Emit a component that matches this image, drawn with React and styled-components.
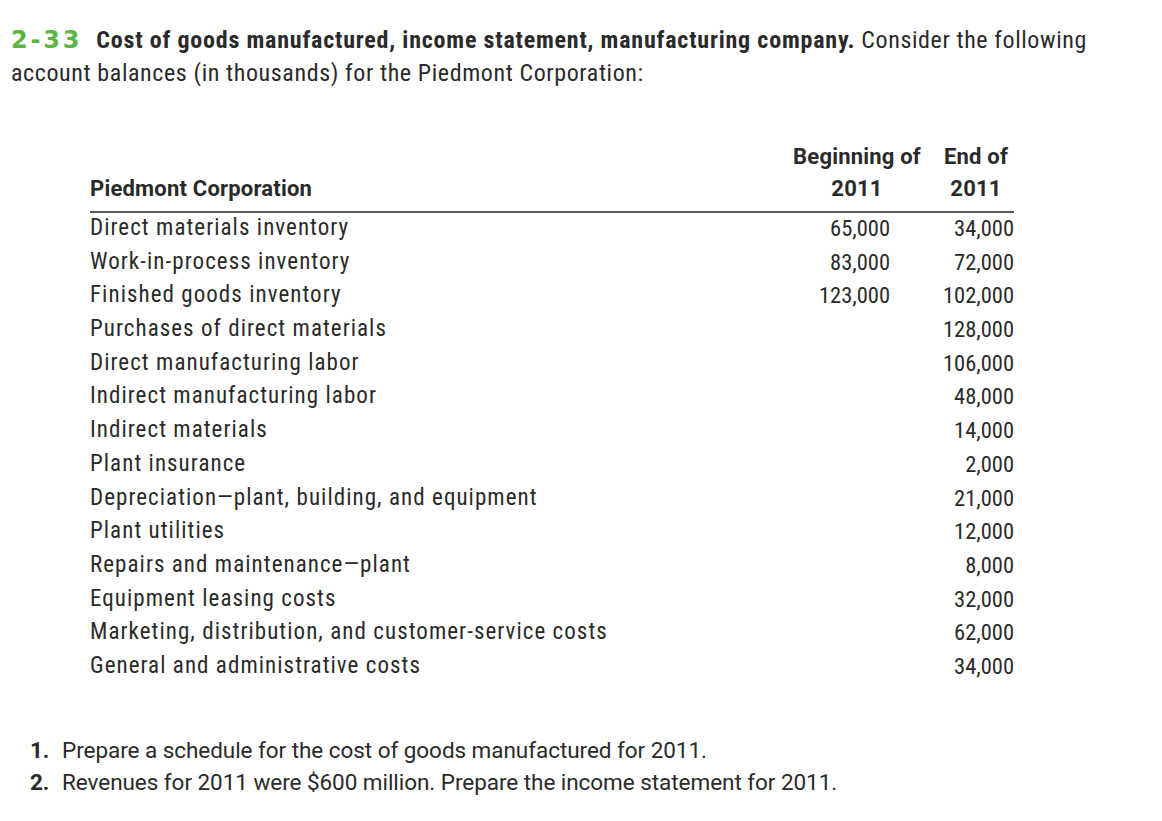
import React from 'react';
import styled, { createGlobalStyle } from 'styled-components';

const Global = createGlobalStyle`
  body {
    margin: 0;
    background: #fff;
    color: #2a2a2a;
    font-family: Roboto, "Liberation Sans", sans-serif;
    font-stretch: 75%;
  }
`;

const Page = styled.div`
  width: 1162px;
  height: 821px;
  padding: 24px 0 0 11px;
  box-sizing: border-box;
`;

const Intro = styled.p`
  margin: 0;
  font-size: 24px;
  line-height: 33px;
  font-stretch: 75%;
  letter-spacing: 0.6px;
`;

const Number = styled.span`
  font-family: "DejaVu Sans", "Liberation Sans", sans-serif;
  font-stretch: normal;
  font-weight: 700;
  color: #5cb646;
  font-size: 24px;
  margin-right: 14px;
  letter-spacing: 2.8px;
`;

const Heading = styled.b`
  font-weight: 700;
  letter-spacing: 0.8px;
`;

const Table = styled.div`
  margin: 51px 0 0 79px;
  width: 924px;
`;

const HeadRow = styled.div`
  display: flex;
  align-items: flex-end;
  font-weight: 700;
  font-size: 22px;
  font-stretch: 100%;
  letter-spacing: 0.2px;
  line-height: 32px;
  padding: 0 6px 6px 0;
  border-bottom: 2px solid #5a5a5a;
`;

const HeadCell = styled.div`
  text-align: ${(p) => (p.left ? 'left' : 'center')};
  flex: ${(p) => (p.left ? 1 : 'none')};
  margin-left: ${(p) => p.gap || 0}px;
`;

const Row = styled.div`
  display: grid;
  grid-template-columns: 1fr 128px 124px;
  box-sizing: border-box;
  font-size: 23px;
  height: 33.7px;
  line-height: 30px;
  padding-bottom: 3.7px;
  letter-spacing: 1.05px;
`;

const Label = styled.div`
  white-space: nowrap;
`;

const Amount = styled.div`
  text-align: right;
  font-size: 22.5px;
  letter-spacing: 0;
`;

const Questions = styled.ol`
  list-style: none;
  margin: 49px 0 0 19px;
  padding: 0;
  font-size: 22.5px;
  line-height: 32px;
  font-stretch: 100%;
  letter-spacing: -0.05px;
`;

const Question = styled.li`
  display: flex;
`;

const QNum = styled.span`
  font-weight: 700;
  width: 32px;
`;

const rows = [
  ['Direct materials inventory', '65,000', '34,000'],
  ['Work-in-process inventory', '83,000', '72,000'],
  ['Finished goods inventory', '123,000', '102,000'],
  ['Purchases of direct materials', '', '128,000'],
  ['Direct manufacturing labor', '', '106,000'],
  ['Indirect manufacturing labor', '', '48,000'],
  ['Indirect materials', '', '14,000'],
  ['Plant insurance', '', '2,000'],
  ['Depreciation\u2014plant, building, and equipment', '', '21,000'],
  ['Plant utilities', '', '12,000'],
  ['Repairs and maintenance\u2014plant', '', '8,000'],
  ['Equipment leasing costs', '', '32,000'],
  ['Marketing, distribution, and customer-service costs', '', '62,000'],
  ['General and administrative costs', '', '34,000'],
];

export default function App() {
  return (
    <Page>
      <Global />
      <Intro>
        <Number>2-33</Number>
        <Heading>Cost of goods manufactured, income statement, manufacturing company.</Heading>{' '}
        Consider the following
        <br />
        account balances (in thousands) for the Piedmont Corporation:
      </Intro>

      <Table>
        <HeadRow>
          <HeadCell left>Piedmont Corporation</HeadCell>
          <HeadCell>
            Beginning of
            <br />
            2011
          </HeadCell>
          <HeadCell gap={23}>
            End of
            <br />
            2011
          </HeadCell>
        </HeadRow>
        {rows.map(([label, begin, end]) => (
          <Row key={label}>
            <Label>{label}</Label>
            <Amount>{begin}</Amount>
            <Amount>{end}</Amount>
          </Row>
        ))}
      </Table>

      <Questions>
        <Question>
          <QNum>1.</QNum>
          <span>Prepare a schedule for the cost of goods manufactured for 2011.</span>
        </Question>
        <Question>
          <QNum>2.</QNum>
          <span>Revenues for 2011 were $600 million. Prepare the income statement for 2011.</span>
        </Question>
      </Questions>
    </Page>
  );
}
